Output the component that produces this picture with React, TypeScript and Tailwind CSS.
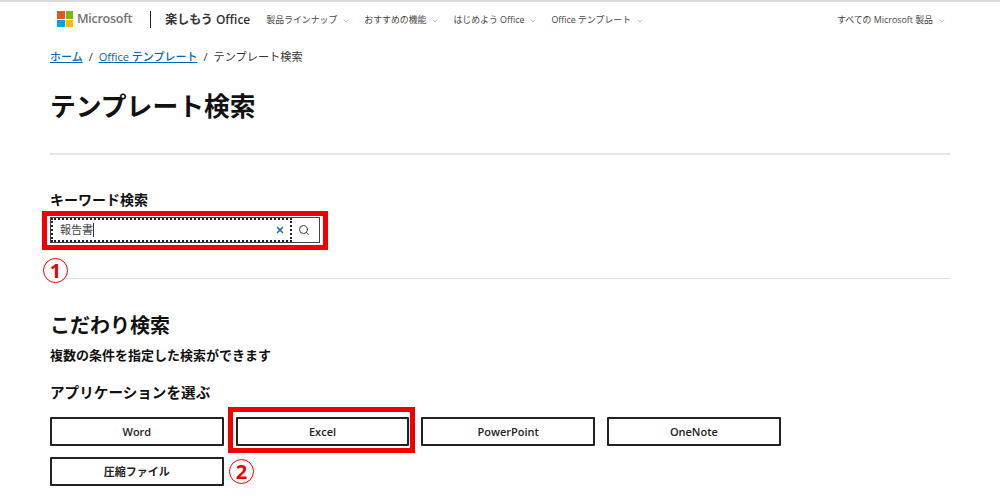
import { ChevronDown, Search, X } from 'lucide-react';

const font = { fontFamily: '"Open Sans", "Noto Sans CJK JP", sans-serif' };

const navItems = ['製品ラインナップ', 'おすすめの機能', 'はじめよう Office', 'Office テンプレート'];
const apps = ['Word', 'Excel', 'PowerPoint', 'OneNote', '圧縮ファイル'];

function NavItem({ label }: { label: string }) {
  return (
    <div className="flex items-center gap-[5px] text-[8.9px] text-[#444]">
      <span>{label}</span>
      <ChevronDown size={8} strokeWidth={1.25} className="mt-[2px] text-[#666]" />
    </div>
  );
}

function MicrosoftLogo() {
  return (
    <div className="grid grid-cols-2 gap-px w-[16px] h-[16px]">
      <div className="bg-[#f25022]" />
      <div className="bg-[#7fba00]" />
      <div className="bg-[#00a4ef]" />
      <div className="bg-[#ffb900]" />
    </div>
  );
}

function CircleNumber({ n, className }: { n: number; className: string }) {
  return (
    <div
      className={`absolute w-[25px] h-[25px] rounded-full border-[1.5px] border-[#f00000] bg-white flex items-center justify-center text-[#f00000] text-[20px] font-bold leading-none ${className}`}
    >
      {n}
    </div>
  );
}

export default function App() {
  return (
    <div style={font} className="relative w-[1000px] h-[500px] overflow-hidden bg-white border-t-[2px] border-[#d9d9d9]">
      {/* Header */}
      <div className="flex items-center h-[34px] pl-[57px] pr-[54px]">
        <MicrosoftLogo />
        <span className="ml-[4px] text-[12.6px] font-semibold text-[#737373] tracking-[-0.3px]">Microsoft</span>
        <div className="ml-[18px] w-px h-[17px] bg-[#222]" />
        <span className="ml-[14px] mt-[1px] text-[12px] font-semibold text-[#333]">楽しもう Office</span>
        <div className="ml-[16px] mt-[2px] flex items-center gap-[14px]">
          {navItems.map((item) => (
            <NavItem key={item} label={item} />
          ))}
        </div>
        <div className="ml-auto mt-[2px]">
          <NavItem label="すべての Microsoft 製品" />
        </div>
      </div>

      <div className="px-[50px]">
        {/* Breadcrumb */}
        <div className="mt-[13px] flex items-center h-[16px] text-[11px] text-[#333]">
          <a className="text-[#0067b8] underline font-medium">ホーム</a>
          <span className="mx-[6px]">/</span>
          <a className="text-[#0067b8] underline font-medium">Office テンプレート</a>
          <span className="mx-[6px]">/</span>
          <span className="text-[11.2px]">テンプレート検索</span>
        </div>

        <h1 className="mt-[23px] text-[25.8px] leading-[36px] font-bold text-[#111]">テンプレート検索</h1>

        <hr className="mt-[29px] border-t-[2px] border-[#e6e6e6]" />

        {/* Keyword search */}
        <div className="mt-[35px] text-[14px] leading-[20px] font-bold text-[#111]">キーワード検索</div>
        <div className="relative mt-[7px] w-[270px] h-[26px] flex border border-[#444] bg-white">
          <div className="flex-1 flex items-center justify-between pl-[7px] pr-[5px] border-2 border-dotted border-[#222]">
            <span className="text-[11px] text-[#444] border-r border-[#333] leading-[14px]">報告書</span>
            <X size={10} strokeWidth={4} className="text-[#2b6ca8]" />
          </div>
          <div className="w-[27px] flex items-center justify-center pr-[3px]">
            <Search size={12} strokeWidth={1.75} className="text-[#222]" />
          </div>
          <div className="absolute left-[-9px] top-[-7px] w-[286px] h-[39px] border-[5px] border-[#f00000]" />
        </div>

        <hr className="mt-[35px] border-t border-[#e0e0e0]" />

        {/* Detailed search */}
        <h2 className="mt-[35px] text-[20px] leading-[24px] font-bold text-[#111]">こだわり検索</h2>
        <p className="mt-[7px] text-[13px] leading-[20px] font-bold text-[#111]">複数の条件を指定した検索ができます</p>
        <h3 className="mt-[17px] text-[14.6px] leading-[20px] font-bold text-[#111]">アプリケーションを選ぶ</h3>

        <div className="mt-[15px] flex flex-wrap gap-x-[12px] gap-y-[11px] w-[800px]">
          {apps.map((app) => (
            <button
              key={app}
              className="relative w-[173.7px] h-[29px] border-2 border-[#222] rounded-[1px] bg-white text-[11px] font-semibold text-[#222] flex items-center justify-center pt-[2px]"
            >
              {app}
              {app === 'Excel' && (
                <div className="absolute left-[-10px] top-[-12px] w-[187px] h-[46px] border-[5px] border-[#f00000]" />
              )}
            </button>
          ))}
        </div>
      </div>

      <CircleNumber n={1} className="left-[43px] top-[256px]" />
      <CircleNumber n={2} className="left-[229px] top-[457px]" />
    </div>
  );
}
